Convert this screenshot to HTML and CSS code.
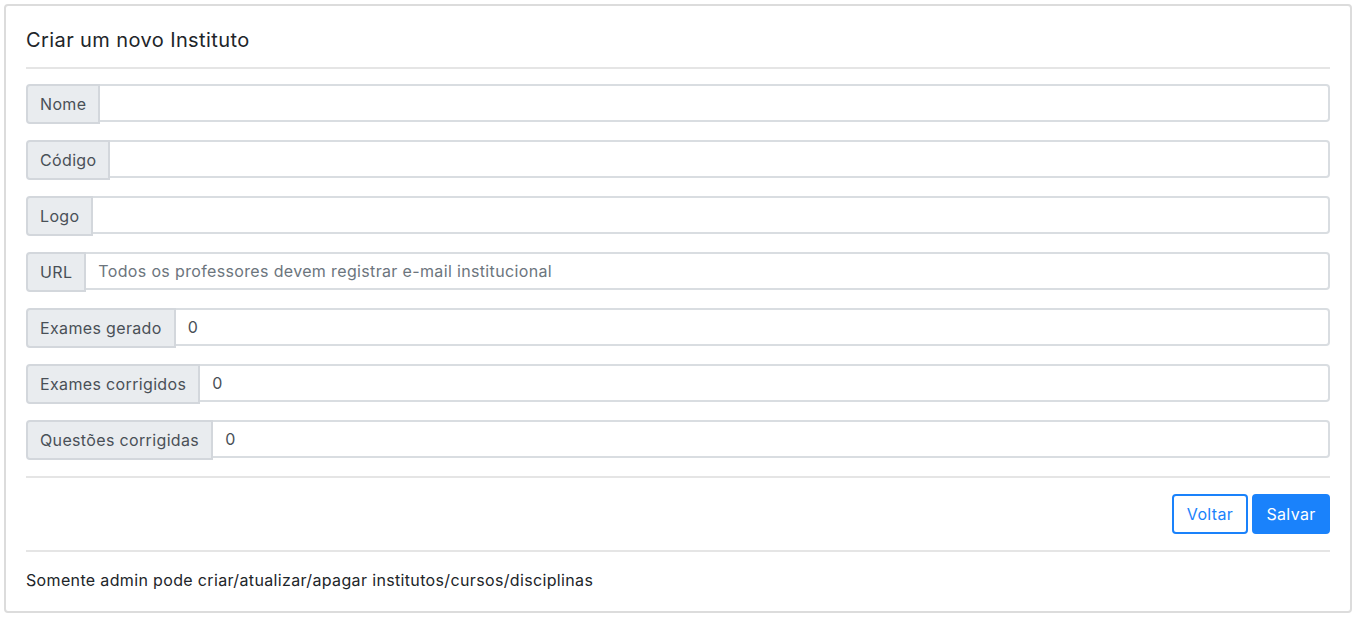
FILE: index.html
```html
<!DOCTYPE html>
<html lang="pt">
<head>
<meta charset="utf-8">
<title>Criar um novo Instituto</title>
<link rel="stylesheet" href="styles.css">
</head>
<body>
<div class="card">
  <div class="card-header">Criar um novo Instituto</div>
  <form class="form">
    <div class="group"><span class="label">Nome</span><input class="field" type="text"></div>
    <div class="group"><span class="label">Código</span><input class="field" type="text"></div>
    <div class="group"><span class="label">Logo</span><input class="field" type="text"></div>
    <div class="group"><span class="label">URL</span><input class="field" type="text" placeholder="Todos os professores devem registrar e-mail institucional"></div>
    <div class="group"><span class="label">Exames gerado</span><input class="field" type="text" value="0"></div>
    <div class="group"><span class="label">Exames corrigidos</span><input class="field" type="text" value="0"></div>
    <div class="group"><span class="label">Questões corrigidas</span><input class="field" type="text" value="0"></div>
  </form>
  <div class="actions">
    <button class="btn btn-outline" type="button">Voltar</button>
    <button class="btn btn-primary" type="button">Salvar</button>
  </div>
  <div class="footer">Somente admin pode criar/atualizar/apagar institutos/cursos/disciplinas</div>
</div>
</body>
</html>
```
FILE: styles.css
```css
* { box-sizing: border-box; }
html, body { margin: 0; padding: 0; background: #fff; }
body {
  font-family: Inter, "Noto Sans", "Liberation Sans", sans-serif;
  color: #212529;
  padding: 4px;
  letter-spacing: 0.35px;
}
.card {
  width: 1348px;
  height: 609px;
  border: 2px solid #dcdcdc;
  border-radius: 4px;
  padding: 0 20px;
  display: flex;
  flex-direction: column;
}
.card-header {
  font-size: 20px;
  line-height: 24px;
  letter-spacing: 0.4px;
  padding: 22px 0 15px;
  border-bottom: 2px solid #e5e5e5;
  color: #212529;
}
.form {
  padding: 15px 0 18px;
  display: flex;
  flex-direction: column;
  gap: 18px;
  border-bottom: 2px solid #e5e5e5;
}
.group {
  display: flex;
  align-items: flex-start;
  height: 38px;
}
.label {
  height: 40px;
  display: flex;
  align-items: center;
  padding: 0 12px;
  background: #e9ecef;
  border: 2px solid #d3d7dc;
  border-radius: 4px 0 0 4px;
  font-size: 16px;
  color: #495057;
  white-space: nowrap;
}
.field {
  flex: 1;
  height: 38px;
  border: 2px solid #d9dde1;
  border-left: 0;
  border-radius: 0 4px 4px 0;
  padding: 0 12px;
  font-family: inherit;
  font-size: 16px;
  letter-spacing: 0.35px;
  color: #495057;
  outline: none;
  background: #fff;
}
.field::placeholder { color: #6c757d; opacity: 1; }
.actions {
  display: flex;
  justify-content: flex-end;
  gap: 4px;
  padding: 16px 0;
  border-bottom: 2px solid #e5e5e5;
}
.btn {
  height: 40px;
  border-radius: 4px;
  font-family: inherit;
  font-size: 16px;
  letter-spacing: 0.35px;
  padding: 0;
  border: 2px solid #1a82fb;
  cursor: pointer;
}
.btn-outline { background: #fff; color: #1a82fb; width: 76px; }
.btn-primary { background: #1a82fb; color: #fff; width: 78px; }
.footer {
  font-size: 16px;
  line-height: 24px;
  padding-top: 16px;
  color: #212529;
}
```
